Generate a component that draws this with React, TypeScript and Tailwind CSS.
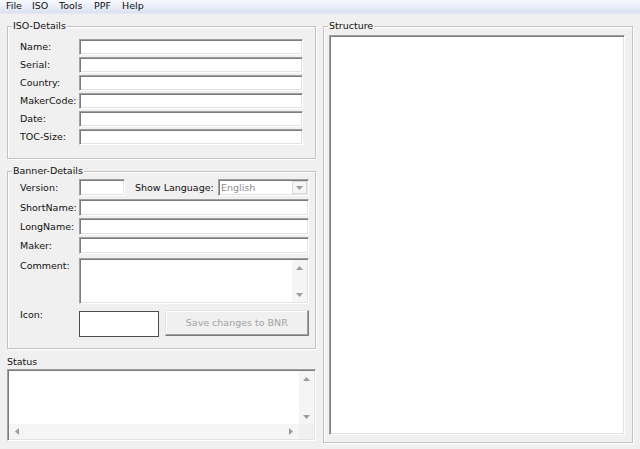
import React from "react";

// Win32-style sunken edit border
const sunken =
  "bg-white border border-t-[#a0a0a0] border-l-[#a0a0a0] border-r-white border-b-white shadow-[inset_1px_1px_0_#7c7c7c,inset_-1px_-1px_0_#e3e3e3]";

const etched =
  "relative border border-[#c2c2c2] shadow-[inset_1px_1px_0_#ffffff,1px_1px_0_#ffffff]";

function Arrow({ dir }: { dir: "up" | "down" | "left" | "right" }) {
  const pts = {
    up: "0,4 3.5,0 7,4",
    down: "0,0 3.5,4 7,0",
    left: "4,0 0,3.5 4,7",
    right: "0,0 4,3.5 0,7",
  }[dir];
  const vertical = dir === "up" || dir === "down";
  return (
    <svg
      width={vertical ? 7 : 4}
      height={vertical ? 4 : 7}
      viewBox={vertical ? "0 0 7 4" : "0 0 4 7"}
    >
      <polygon points={pts} fill="#9c9c9c" />
    </svg>
  );
}

function VScroll() {
  return (
    <div className="w-[15px] shrink-0 flex flex-col justify-between bg-[#f5f5f5]">
      <div className="h-[15px] flex items-center justify-center">
        <Arrow dir="up" />
      </div>
      <div className="h-[15px] flex items-center justify-center">
        <Arrow dir="down" />
      </div>
    </div>
  );
}

function GroupBox({
  title,
  className,
  children,
}: {
  title: string;
  className: string;
  children: React.ReactNode;
}) {
  return (
    <div className={`${etched} ${className}`}>
      <span className="absolute top-[-7px] left-[4px] px-[1px] bg-[#f0f0f0] leading-[12px]">
        {title}
      </span>
      {children}
    </div>
  );
}

function Row({
  label,
  children,
  className = "",
}: {
  label: string;
  children: React.ReactNode;
  className?: string;
}) {
  return (
    <div className={`flex items-center ${className}`}>
      <span className="w-[59px] shrink-0 leading-[12px]">{label}</span>
      {children}
    </div>
  );
}

export default function App() {
  const isoFields = ["Name:", "Serial:", "Country:", "MakerCode:", "Date:", "TOC-Size:"];

  return (
    <div className="w-[640px] h-[449px] overflow-hidden bg-[#f0f0f0] text-[#111] font-['DejaVu_Sans',sans-serif] text-[9.5px]">
      {/* Menu bar */}
      <div className="h-[14px] flex items-center pl-[6px] bg-gradient-to-b from-[#f8f9fd] to-[#dbe1f2] border-b border-[#e3e8f4]">
        <span className="w-[26px]">File</span>
        <span className="w-[27px]">ISO</span>
        <span className="w-[35px]">Tools</span>
        <span className="w-[28px]">PPF</span>
        <span>Help</span>
      </div>

      <div className="flex pl-[7px] gap-[7px]">
        {/* Left column */}
        <div className="w-[309px] flex flex-col">
          <GroupBox title="ISO-Details" className="mt-[12px] h-[133px]">
            <div className="pl-[12px] pt-[12px] flex flex-col gap-[2px]">
              {isoFields.map((f) => (
                <Row key={f} label={f}>
                  <div className={`${sunken} w-[224px] h-[16px]`} />
                </Row>
              ))}
            </div>
          </GroupBox>

          <GroupBox title="Banner-Details" className="mt-[12px] h-[178px]">
            <div className="pl-[12px] pt-[7px] w-[301px] flex flex-col">
              <Row label="Version:">
                <div className={`${sunken} w-[46px] h-[17px]`} />
                <span className="ml-[10px] leading-[12px]">Show Language:</span>
                <div className={`${sunken} ml-auto w-[91px] h-[17px] flex items-center justify-between pl-[2px] pr-[1px]`}>
                  <span className="text-[#8d8d8d] leading-[12px]">English</span>
                  <div className="w-[15px] h-[13px] bg-[#f6f6f6] border border-[#d9d9d9] flex items-center justify-center">
                    <Arrow dir="down" />
                  </div>
                </div>
              </Row>
              <Row label="ShortName:" className="mt-[3px]">
                <div className={`${sunken} w-[230px] h-[17px]`} />
              </Row>
              <Row label="LongName:" className="mt-[2px]">
                <div className={`${sunken} w-[230px] h-[17px]`} />
              </Row>
              <Row label="Maker:" className="mt-[2px]">
                <div className={`${sunken} w-[230px] h-[17px]`} />
              </Row>
              <div className="flex items-start mt-[4px]">
                <span className="w-[59px] shrink-0 leading-[12px] mt-[2px]">Comment:</span>
                <div className={`${sunken} w-[230px] h-[46px] flex justify-end p-px`}>
                  <VScroll />
                </div>
              </div>
              <div className="flex items-start mt-[6px]">
                <span className="w-[59px] shrink-0 leading-[12px] mt-[-1px]">Icon:</span>
                <div className="mt-[1px] w-[80px] h-[26px] bg-white border border-[#4d4d4d]" />
                <div className="ml-[6px] w-[145px] h-[26px] bg-[#f0f0f0] border border-t-[#e3e3e3] border-l-[#e3e3e3] border-r-[#7a7a7a] border-b-[#7a7a7a] shadow-[inset_-1px_-1px_0_#a0a0a0,inset_1px_1px_0_#ffffff] flex items-center justify-center text-[#a3a3a3]">
                  Save changes to BNR
                </div>
              </div>
            </div>
          </GroupBox>

          <span className="mt-[7px] leading-[12px]">Status</span>
          <div className={`${sunken} mt-[1px] h-[72px] flex flex-col p-px`}>
            <div className="flex-1 flex justify-end">
              <VScroll />
            </div>
            <div className="h-[15px] flex">
              <div className="flex-1 bg-[#f5f5f5] flex items-center justify-between px-[6px]">
                <Arrow dir="left" />
                <Arrow dir="right" />
              </div>
              <div className="w-[15px] bg-[#f0f0f0]" />
            </div>
          </div>
        </div>

        {/* Right column */}
        <GroupBox title="Structure" className="mt-[12px] w-[310px] h-[417px]">
          <div className="pl-[5px] pt-[8px]">
            <div className={`${sunken} w-[296px] h-[400px]`} />
          </div>
        </GroupBox>
      </div>
    </div>
  );
}
